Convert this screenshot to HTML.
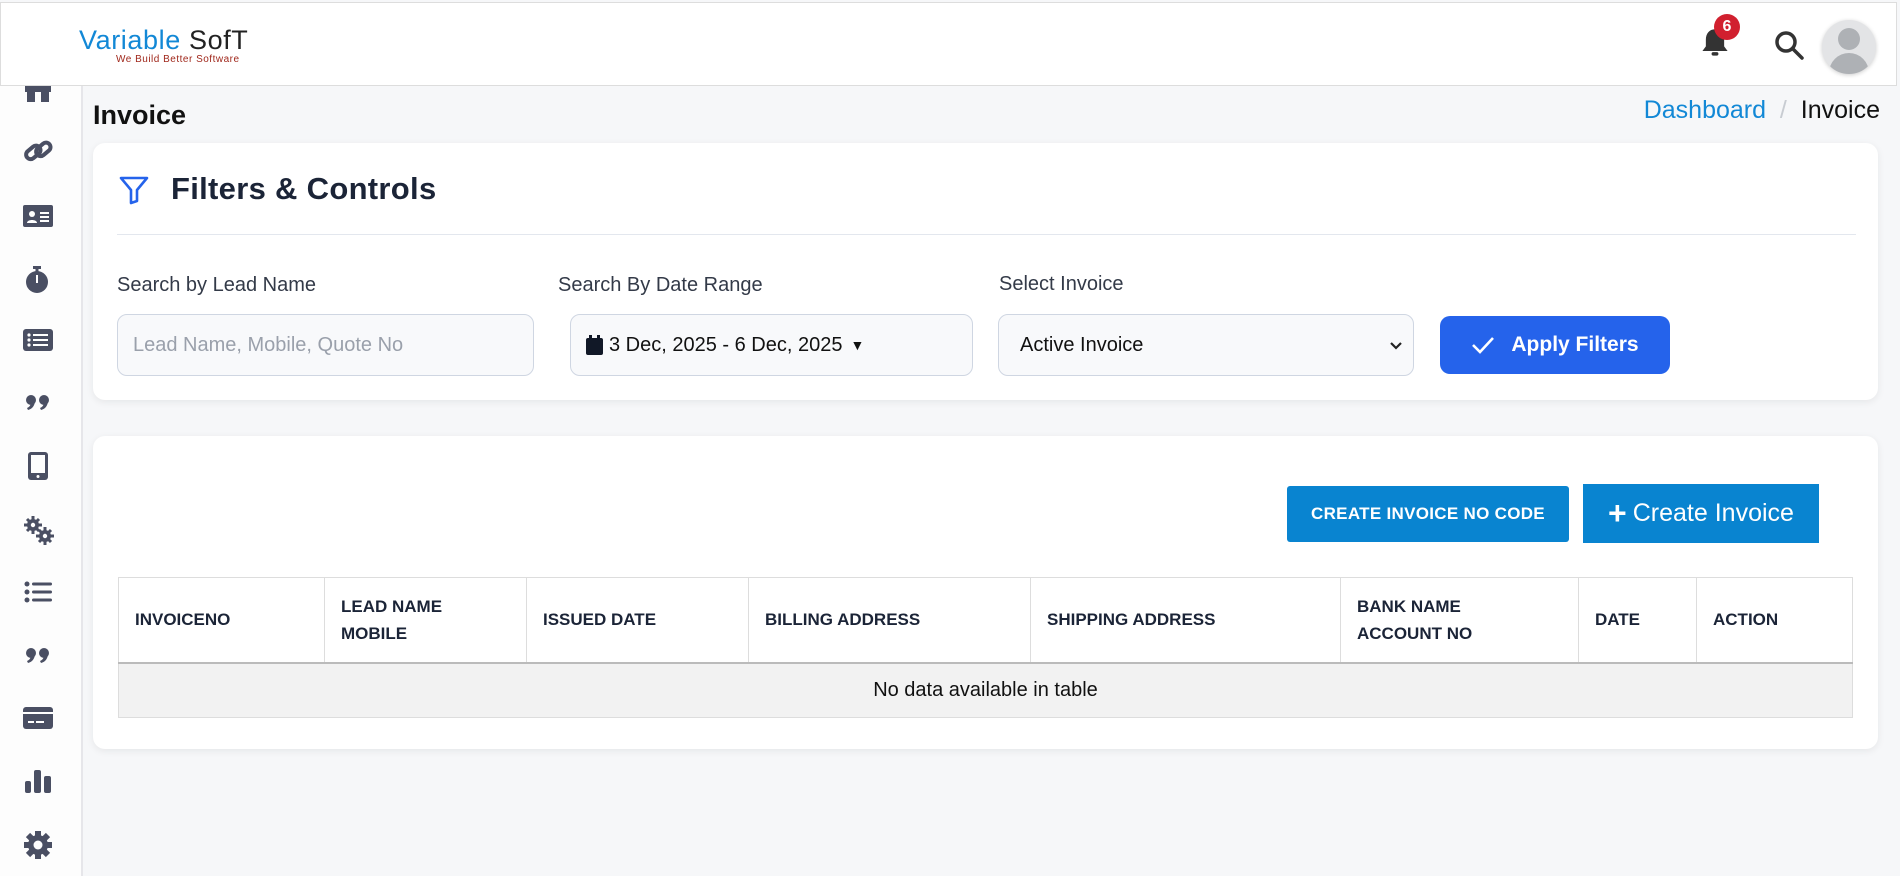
<!DOCTYPE html>
<html><head><meta charset="utf-8"><style>
*{box-sizing:border-box;margin:0;padding:0}
body{width:1900px;height:876px;overflow:hidden;background:#f6f7f9;font-family:"Liberation Sans",sans-serif;position:relative;color:#1b2437}
.abs{position:absolute}
.hdr{left:0;top:2px;width:1897px;height:84px;background:#fff;border:1px solid #ddd}
.side{left:0;top:86px;width:83px;height:790px;background:#fdfdfd;border-right:2px solid #e6e6ea}
.ic{position:absolute;left:22px;width:32px;height:32px}
.card{background:#fff;border-radius:12px;box-shadow:0 2px 8px rgba(0,0,0,.07)}
.lbl{font-size:20px;color:#333a48}
.inp{height:62px;border:1px solid #cfd6e2;border-radius:10px;background:#f8f9fb;font-size:20px;display:flex;align-items:center}
th{font-size:17px;font-weight:bold;text-align:left;padding:0 16px;color:#1b2437;border-left:1px solid #ddd;line-height:27px}
th:first-child{border-left:none}
</style></head><body>
<div class="abs hdr">
 <div class="abs" style="left:78px;top:22px;font-size:27px;letter-spacing:0.6px;color:#1288d6">Variable <span style="color:#222">SofT</span></div>
 <div class="abs" style="left:115px;top:51px;font-size:10px;color:#a0281c;letter-spacing:.5px">We Build Better Software</div>
 <svg class="abs" style="left:1700px;top:24px" width="28" height="32" viewBox="0 0 24 28"><path d="M12 2c-5 0-8 4-8 9v6l-3 4h22l-3-4v-6c0-5-3-9-8-9z" fill="#333"/><rect x="9" y="22" width="6" height="3" rx="1.5" fill="#333"/></svg>
 <div class="abs" style="left:1713px;top:11px;width:26px;height:26px;border-radius:50%;background:#d1202f;color:#fff;font-size:16px;font-weight:bold;text-align:center;line-height:26px">6</div>
 <svg class="abs" style="left:1772px;top:26px" width="32" height="32" viewBox="0 0 32 32"><circle cx="13" cy="13" r="9" fill="none" stroke="#333" stroke-width="3.5"/><line x1="20" y1="20" x2="29" y2="29" stroke="#333" stroke-width="3.5" stroke-linecap="round"/></svg>
 <div class="abs" style="left:1821px;top:17px;width:54px;height:54px;border-radius:50%;background:#e3e4e6;box-shadow:0 1px 4px rgba(0,0,0,.2);overflow:hidden">
  <div class="abs" style="left:16px;top:8px;width:22px;height:22px;border-radius:50%;background:#aeb1b5"></div>
  <div class="abs" style="left:7px;top:33px;width:40px;height:30px;border-radius:20px 20px 0 0;background:#aeb1b5"></div>
 </div>
</div>
<div class="abs side">
 <svg class="ic" style="top:-10px" viewBox="0 0 32 32"><rect x="3" y="10" width="26" height="6" fill="#4a4f63"/><rect x="5" y="16" width="8" height="10" fill="#4a4f63"/><rect x="19" y="16" width="8" height="10" fill="#4a4f63"/></svg>
 <svg class="ic" style="top:49px" viewBox="0 0 32 32"><g fill="none" stroke="#4a4f63" stroke-width="4"><rect x="3" y="13" width="16" height="9" rx="4.5" transform="rotate(-40 11 17)"/><rect x="13" y="10" width="16" height="9" rx="4.5" transform="rotate(-40 21 14)"/></g></svg>
 <svg class="ic" style="top:114px" viewBox="0 0 32 32"><rect x="1" y="5" width="30" height="22" rx="2" fill="#4a4f63"/><circle cx="10" cy="14" r="3" fill="#fff"/><path d="M5 23c0-4 10-4 10 0z" fill="#fff"/><rect x="18" y="12" width="9" height="2" fill="#fff"/><rect x="18" y="16" width="9" height="2" fill="#fff"/><rect x="18" y="20" width="9" height="2" fill="#fff"/></svg>
 <svg class="ic" style="top:177px" viewBox="0 0 32 32"><circle cx="15" cy="19" r="11" fill="#4a4f63"/><rect x="11" y="3" width="8" height="3" fill="#4a4f63"/><rect x="13.5" y="5" width="3" height="4" fill="#4a4f63"/><rect x="14" y="12" width="2" height="8" fill="#fff"/></svg>
 <svg class="ic" style="top:238px" viewBox="0 0 32 32"><rect x="1" y="5" width="30" height="22" rx="3" fill="#4a4f63"/><g fill="#fff"><circle cx="7" cy="11" r="1.6"/><circle cx="7" cy="16" r="1.6"/><circle cx="7" cy="21" r="1.6"/><rect x="11" y="10" width="15" height="2"/><rect x="11" y="15" width="15" height="2"/><rect x="11" y="20" width="15" height="2"/></g></svg>
 <svg class="ic" style="top:301px" viewBox="0 0 32 32"><g fill="#4a4f63"><circle cx="9" cy="13" r="5"/><path d="M13 13c0 6-3 9-7 10l-1-2c3-1 4-4 4-6z"/><circle cx="22" cy="13" r="5"/><path d="M26 13c0 6-3 9-7 10l-1-2c3-1 4-4 4-6z"/></g></svg>
 <svg class="ic" style="top:364px" viewBox="0 0 32 32"><rect x="6" y="2" width="20" height="28" rx="3" fill="#4a4f63"/><rect x="9" y="5" width="14" height="18" fill="#fdfdfd"/><circle cx="16" cy="26.5" r="1.5" fill="#fff"/></svg>
 <svg class="ic" style="top:428px" viewBox="0 0 32 32"><g fill="#4a4f63"><circle cx="11" cy="11" r="6"/><circle cx="23" cy="22" r="6"/></g><g stroke="#4a4f63" stroke-width="3"><path d="M11 2v18M2 11h18M5 5l12 12M17 5L5 17"/><path d="M23 13v18M14 22h18M17 16l12 12M29 16L17 28"/></g><circle cx="11" cy="11" r="2.2" fill="#fff"/><circle cx="23" cy="22" r="2.2" fill="#fff"/></svg>
 <svg class="ic" style="top:490px" viewBox="0 0 32 32"><g fill="#4a4f63"><circle cx="5" cy="8" r="2.5"/><circle cx="5" cy="16" r="2.5"/><circle cx="5" cy="24" r="2.5"/><rect x="10" y="6.5" width="20" height="3" rx="1.5"/><rect x="10" y="14.5" width="20" height="3" rx="1.5"/><rect x="10" y="22.5" width="20" height="3" rx="1.5"/></g></svg>
 <svg class="ic" style="top:554px" viewBox="0 0 32 32"><g fill="#4a4f63"><circle cx="9" cy="13" r="5"/><path d="M13 13c0 6-3 9-7 10l-1-2c3-1 4-4 4-6z"/><circle cx="22" cy="13" r="5"/><path d="M26 13c0 6-3 9-7 10l-1-2c3-1 4-4 4-6z"/></g></svg>
 <svg class="ic" style="top:616px" viewBox="0 0 32 32"><rect x="1" y="5" width="30" height="22" rx="3" fill="#4a4f63"/><rect x="1" y="10" width="30" height="2" fill="#fff"/><rect x="6" y="19" width="6" height="2" fill="#fff"/><rect x="14" y="19" width="8" height="2" fill="#fff"/></svg>
 <svg class="ic" style="top:679px" viewBox="0 0 32 32"><g fill="#4a4f63"><rect x="3" y="16" width="6" height="12" rx="2"/><rect x="12" y="5" width="7" height="23" rx="2"/><rect x="22" y="11" width="7" height="17" rx="2"/></g></svg>
 <svg class="ic" style="top:743px" viewBox="0 0 32 32"><circle cx="16" cy="16" r="10" fill="#4a4f63"/><g stroke="#4a4f63" stroke-width="6"><path d="M16 2v28M2 16h28M6 6l20 20M26 6L6 26"/></g><circle cx="16" cy="16" r="4.5" fill="#fdfdfd"/></svg>
</div>
<div class="abs" style="left:93px;top:100px;font-size:27px;font-weight:bold;color:#111">Invoice</div>
<div class="abs" style="right:20px;top:96px;font-size:25px"><span style="color:#1288d6">Dashboard</span> <span style="color:#c8ccd2">&nbsp;/&nbsp;</span> <span style="color:#111">Invoice</span></div>

<div class="abs card" style="left:93px;top:143px;width:1785px;height:257px">
 <svg class="abs" style="left:25px;top:31px" width="32" height="32" viewBox="0 0 32 32"><path d="M3 4h26l-10 12v11l-6 2V16z" fill="none" stroke="#2563eb" stroke-width="2.6" stroke-linejoin="round"/></svg>
 <div class="abs" style="left:78px;top:28px;font-size:31px;font-weight:bold;color:#1b2437;letter-spacing:0.3px">Filters &amp; Controls</div>
 <div class="abs" style="left:24px;top:91px;width:1739px;height:1px;background:#e3e7ee"></div>
 <div class="abs lbl" style="left:24px;top:131px">Search by Lead Name</div>
 <div class="abs lbl" style="left:465px;top:131px">Search By Date Range</div>
 <div class="abs lbl" style="left:906px;top:130px">Select Invoice</div>
 <div class="abs inp" style="left:24px;top:171px;width:417px;padding-left:15px;color:#9aa0ab">Lead Name, Mobile, Quote No</div>
 <div class="abs inp" style="left:477px;top:171px;width:403px;padding-left:15px;color:#111"><svg width="17" height="20" viewBox="0 0 17 20" style="margin-right:6px"><rect x="0" y="3" width="17" height="17" rx="2" fill="#111827"/><rect x="3" y="0" width="3" height="5" fill="#111827"/><rect x="11" y="0" width="3" height="5" fill="#111827"/></svg>3 Dec, 2025 - 6 Dec, 2025 <span style="font-size:14px;margin-left:8px">&#9660;</span></div>
 <div class="abs inp" style="left:905px;top:171px;width:416px;padding-left:21px;color:#111">Active Invoice<svg class="abs" style="right:10px;top:26px" width="14" height="10" viewBox="0 0 14 10"><path d="M2 2l5 5 5-5" fill="none" stroke="#222" stroke-width="2.2"/></svg></div>
 <div class="abs" style="left:1347px;top:173px;width:230px;height:58px;border-radius:10px;background:#2563eb;color:#fff;font-size:21px;font-weight:bold;display:flex;align-items:center;justify-content:center"><svg width="24" height="20" viewBox="0 0 24 20" style="margin-right:16px"><path d="M2 10l7 7L22 3" fill="none" stroke="#fff" stroke-width="2.6"/></svg>Apply Filters</div>
</div>

<div class="abs card" style="left:93px;top:436px;width:1785px;height:313px">
 <div class="abs" style="left:1194px;top:50px;width:282px;height:56px;border-radius:3px;background:#0984d0;color:#fff;font-size:17px;font-weight:bold;letter-spacing:.3px;display:flex;align-items:center;justify-content:center">CREATE INVOICE NO CODE</div>
 <div class="abs" style="left:1490px;top:48px;width:236px;height:59px;background:#0984d0;color:#fff;font-size:25px;display:flex;align-items:center;justify-content:center"><span style="font-size:32px;margin-right:6px;font-weight:bold">+</span>Create Invoice</div>
 <table class="abs" style="left:25px;top:141px;width:1735px;border-collapse:collapse;border:1px solid #ddd">
  <tr style="height:85px;border-bottom:2px solid #bbb">
   <th style="width:206px">INVOICENO</th><th style="width:202px">LEAD NAME<br>MOBILE</th><th style="width:222px">ISSUED DATE</th><th style="width:282px">BILLING ADDRESS</th><th style="width:310px">SHIPPING ADDRESS</th><th style="width:238px">BANK NAME<br>ACCOUNT NO</th><th style="width:118px">DATE</th><th>ACTION</th>
  </tr>
  <tr style="height:55px;background:#f2f2f2"><td colspan="8" style="text-align:center;font-size:20px;color:#111">No data available in table</td></tr>
 </table>
</div>
</body></html>
